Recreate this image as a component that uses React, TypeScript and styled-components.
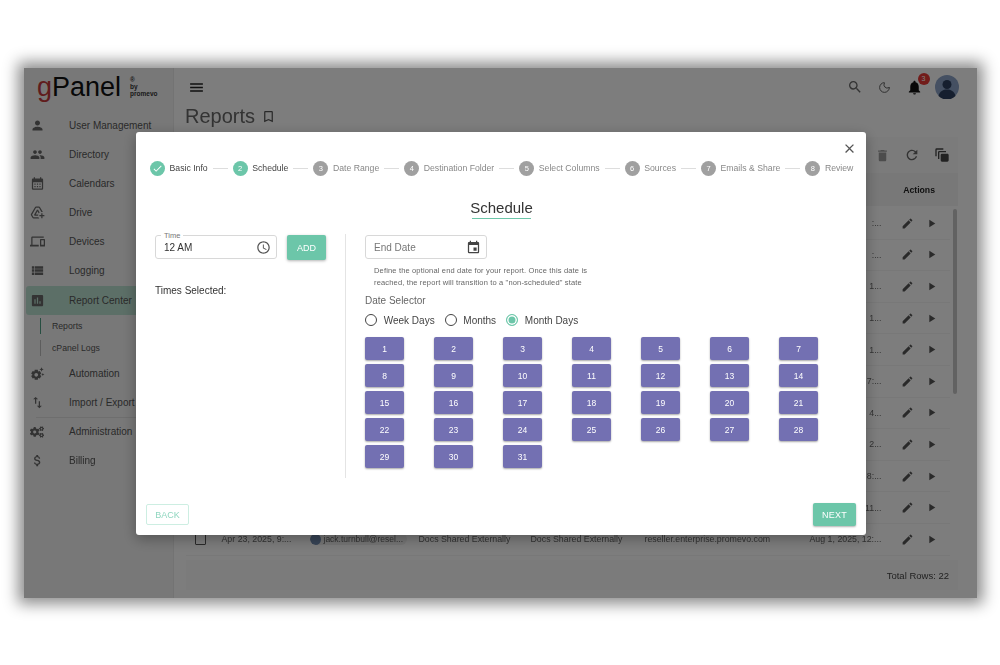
import styled, { createGlobalStyle } from "styled-components";
import {
  MdAccessTime,
  MdAddToDrive,
  MdAttachMoney,
  MdAutoAwesomeMotion,
  MdBookmarkBorder,
  MdCalendarMonth,
  MdCheck,
  MdClose,
  MdDelete,
  MdDevices,
  MdEdit,
  MdEvent,
  MdImportExport,
  MdInsertChart,
  MdMenu,
  MdNotifications,
  MdPeople,
  MdPerson,
  MdPlayArrow,
  MdRefresh,
  MdSearch,
  MdSettingsSuggest,
  MdViewList,
} from "react-icons/md";
import { FaCogs } from "react-icons/fa";
import { Moon } from "lucide-react";

const TEAL = "#6cc6a9";
const PURPLE = "#7370b2";

const GlobalStyle = createGlobalStyle`
  html, body {
    margin: 0;
    padding: 0;
    background: #fff;
    font-family: "Liberation Sans", Arial, sans-serif;
  }
`;

const navTop = [
  { label: "User Management", icon: <MdPerson /> },
  { label: "Directory", icon: <MdPeople /> },
  { label: "Calendars", icon: <MdCalendarMonth /> },
  { label: "Drive", icon: <MdAddToDrive /> },
  { label: "Devices", icon: <MdDevices /> },
  { label: "Logging", icon: <MdViewList /> },
];

const steps = [
  "Basic Info",
  "Schedule",
  "Date Range",
  "Destination Folder",
  "Select Columns",
  "Sources",
  "Emails & Share",
  "Review",
];

// only the tail of the date column shows beside the modal
const dateTails = [":...", ":...", "1...", "1...", "1...", "7:...", "4...", "2...", "8:...", "11..."];

const days = Array.from({ length: 31 }, (_, i) => i + 1);

const ActionIcons = () => (
  <RowActions>
    <MdEdit size={13} color="#555" />
    <MdPlayArrow size={13} color="#555" />
  </RowActions>
);

export default function App() {
  return (
    <Page>
      <GlobalStyle />
      <Frame>
        <Sidebar>
          <Logo>
            <LogoG>g</LogoG>Panel
            <LogoBy>
              ®
              <br />
              by
              <br />
              promevo
            </LogoBy>
          </Logo>
          {navTop.map((n) => (
            <NavItem key={n.label}>
              <NavIcon>{n.icon}</NavIcon>
              {n.label}
            </NavItem>
          ))}
          <NavItem $active>
            <NavIcon>
              <MdInsertChart />
            </NavIcon>
            Report Center
          </NavItem>
          <SubItem $active>Reports</SubItem>
          <SubItem>cPanel Logs</SubItem>
          <NavItem>
            <NavIcon>
              <MdSettingsSuggest />
            </NavIcon>
            Automation
          </NavItem>
          <NavItem>
            <NavIcon>
              <MdImportExport />
            </NavIcon>
            Import / Export
          </NavItem>
          <NavDivider />
          <NavItem>
            <NavIcon>
              <FaCogs size={14} />
            </NavIcon>
            Administration
          </NavItem>
          <NavItem>
            <NavIcon>
              <MdAttachMoney />
            </NavIcon>
            Billing
          </NavItem>
        </Sidebar>

        <Main>
          <TopBar>
            <MdMenu size={17} color="#222" />
            <TopRight>
              <MdSearch size={16} color="#666" />
              <Moon size={13} color="#555" strokeWidth={1.7} />
              <Bell>
                <MdNotifications size={17} color="#111" />
                <BellBadge>3</BellBadge>
              </Bell>
              <Avatar viewBox="0 0 24 24">
                <circle cx="12" cy="12" r="12" fill="#8aa0c4" />
                <circle cx="12" cy="9.5" r="4.500" fill="#2c3f5e" />
                <path d="M3.5 21c1-5 5-6.500 8.500-6.500s7.500 1.500 8.500 6.500a12 12 0 0 1-17 0z" fill="#2c3f5e" />
              </Avatar>
            </TopRight>
          </TopBar>
          <TitleRow>
            <PageTitle>Reports</PageTitle>
            <MdBookmarkBorder size={15} color="#555" />
          </TitleRow>
          <Card>
            <CardToolbar>
              <MdDelete size={15} color="#999" />
              <MdRefresh size={16} color="#666" />
              <MdAutoAwesomeMotion size={16} color="#444" />
            </CardToolbar>
            <TableHead>
              <ActionsHead>Actions</ActionsHead>
            </TableHead>
            <TableArea>
              <Rows>
                {dateTails.map((tail, i) => (
                  <Row key={i}>
                    <Cell $w={72} $right>
                      {tail}
                    </Cell>
                    <ActionIcons />
                  </Row>
                ))}
                <Row>
                  <RowCheck />
                  <Cell $w={88}>Apr 23, 2025, 9:...</Cell>
                  <Chip>
                    <ChipDot />
                    jack.turnbull@resel...
                  </Chip>
                  <Cell $w={112}>Docs Shared Externally</Cell>
                  <Cell $w={114}>Docs Shared Externally</Cell>
                  <Cell $w={165}>reseller.enterprise.promevo.com</Cell>
                  <Cell $w={72}>Aug 1, 2025, 12:...</Cell>
                  <ActionIcons />
                </Row>
              </Rows>
              <ScrollTrack>
                <ScrollThumb />
              </ScrollTrack>
            </TableArea>
            <CardFooter>Total Rows: 22</CardFooter>
          </Card>
        </Main>

        <Dim />

        <Modal>
          <CloseButton>
            <MdClose size={15} />
          </CloseButton>
          <Stepper>
            {steps.map((s, i) => (
              <Step key={s}>
                {i > 0 && <Connector />}
                <StepCircle $on={i < 2}>{i === 0 ? <MdCheck size={11} /> : i + 1}</StepCircle>
                <StepLabel $on={i < 2}>{s}</StepLabel>
              </Step>
            ))}
          </Stepper>
          <Heading>
            <HeadingText>Schedule</HeadingText>
          </Heading>
          <Body>
            <LeftCol>
              <TimeRow>
                <Field $w={122}>
                  <Legend>Time</Legend>
                  <FieldValue>12 AM</FieldValue>
                  <MdAccessTime size={15} color="#555" />
                </Field>
                <AddButton>ADD</AddButton>
              </TimeRow>
              <TimesLabel>Times Selected:</TimesLabel>
            </LeftCol>
            <RightCol>
              <Field $w={122}>
                <FieldPlaceholder>End Date</FieldPlaceholder>
                <MdEvent size={15} color="#444" />
              </Field>
              <HelpText>
                Define the optional end date for your report. Once this date is
                <br />
                reached, the report will transition to a "non-scheduled" state
              </HelpText>
              <SelectorLabel>Date Selector</SelectorLabel>
              <RadioRow>
                <RadioOption>
                  <Radio />
                  Week Days
                </RadioOption>
                <RadioOption>
                  <Radio />
                  Months
                </RadioOption>
                <RadioOption>
                  <Radio $on />
                  Month Days
                </RadioOption>
              </RadioRow>
              <DayGrid>
                {days.map((d) => (
                  <DayButton key={d}>{d}</DayButton>
                ))}
              </DayGrid>
            </RightCol>
          </Body>
          <ModalFooter>
            <BackButton>BACK</BackButton>
            <NextButton>NEXT</NextButton>
          </ModalFooter>
        </Modal>
      </Frame>
    </Page>
  );
}

const Page = styled.div`
  width: 1000px;
  height: 665px;
  box-sizing: border-box;
  padding: 68px 23px 67px 24px;
  overflow: hidden;
  filter: blur(0.5px);
`;

const Frame = styled.div`
  position: relative;
  display: flex;
  height: 530px;
  background: #fafafa;
  box-shadow: 0 0 14px 6px rgba(0, 0, 0, 0.45);
  color: #555;
  overflow: hidden;
`;

const Dim = styled.div`
  position: absolute;
  inset: 0;
  background: rgba(0, 0, 0, 0.5);
`;

const Sidebar = styled.div`
  width: 150px;
  flex: none;
  box-sizing: border-box;
  background: #f0f0f0;
  border-right: 1px solid #e6e6e6;
  padding: 2px 0 0 2px;
  display: flex;
  flex-direction: column;
`;

const Logo = styled.div`
  height: 41px;
  padding-left: 11px;
  font-size: 27px;
  line-height: 34px;
  color: #111;
  display: flex;
  flex: none;
`;

const LogoG = styled.span`
  color: #c0393b;
`;

const LogoBy = styled.span`
  font-size: 6.5px;
  line-height: 7px;
  font-weight: 700;
  color: #333;
  margin: 6px 0 0 9px;
`;

const NavItem = styled.div<{ $active?: boolean }>`
  height: 29px;
  flex: none;
  display: flex;
  align-items: center;
  font-size: 10px;
  color: #555;
  background: ${(p) => (p.$active ? "#b9decf" : "transparent")};
  border-radius: 3px 0 0 3px;
  margin-top: ${(p) => (p.$active ? "1px" : "0")};
`;

const NavIcon = styled.span`
  width: 43px;
  flex: none;
  box-sizing: border-box;
  padding-left: 4px;
  font-size: 15px;
  display: flex;
  color: #666;
`;

const SubItem = styled.div<{ $active?: boolean }>`
  height: 16px;
  flex: none;
  margin: 3px 0 3px 14px;
  border-left: 1px solid ${(p) => (p.$active ? "#4f9c83" : "#bbb")};
  padding-left: 11px;
  font-size: 8.7px;
  line-height: 16px;
  color: #555;
`;

const NavDivider = styled.div`
  height: 1px;
  flex: none;
  margin: 0 0 -1px 10px;
  background: #ddd;
`;

const Main = styled.div`
  flex: 1;
  min-width: 0;
  padding: 0 19px 8px 12px;
  display: flex;
  flex-direction: column;
`;

const TopBar = styled.div`
  height: 38px;
  flex: none;
  display: flex;
  align-items: center;
  justify-content: space-between;
  padding-left: 2px;
`;

const TopRight = styled.div`
  display: flex;
  align-items: center;
  gap: 15px;
`;

const Bell = styled.div`
  position: relative;
  display: flex;
  margin-right: -2.5px;
`;

const BellBadge = styled.span`
  position: absolute;
  top: -6px;
  right: -7px;
  width: 12px;
  height: 12px;
  border-radius: 50%;
  background: #e53935;
  color: #fff;
  font-size: 7px;
  line-height: 12px;
  text-align: center;
`;

const Avatar = styled.svg`
  width: 24px;
  height: 24px;
  margin-right: -1px;
`;

const TitleRow = styled.div`
  height: 21px;
  margin-bottom: 10px;
  flex: none;
  display: flex;
  align-items: center;
  gap: 6px;
  margin-left: -1px;
`;

const PageTitle = styled.h1`
  margin: 0;
  font-size: 20px;
  font-weight: 400;
  color: #666;
`;

const Card = styled.div`
  flex: 1;
  display: flex;
  flex-direction: column;
  min-height: 0;
`;

const CardToolbar = styled.div`
  height: 36px;
  flex: none;
  background: #f7f7f7;
  display: flex;
  align-items: center;
  justify-content: flex-end;
  gap: 14px;
  padding-right: 8px;
`;

const TableHead = styled.div`
  height: 33px;
  flex: none;
  display: flex;
  align-items: center;
  justify-content: flex-end;
  background: #f1f1f1;
  padding-right: 23px;
`;

const ActionsHead = styled.span`
  font-size: 8.7px;
  font-weight: 700;
  color: #222;
`;

const TableArea = styled.div`
  flex: none;
  height: 350px;
  position: relative;
  overflow: hidden;
  padding-right: 8px;
  box-sizing: border-box;
`;

const Rows = styled.div`
  display: grid;
  grid-auto-rows: 31.6px;
  padding-top: 2px;
`;

const Row = styled.div`
  display: flex;
  align-items: center;
  justify-content: flex-end;
  border-bottom: 1px solid #f0f0f0;
  font-size: 8.8px;
  color: #666;
`;

const RowCheck = styled.span`
  width: 9px;
  height: 9px;
  border: 1px solid #555;
  border-radius: 1px;
  margin-right: 16px;
  flex: none;
`;

const Cell = styled.span<{ $w: number; $right?: boolean }>`
  width: ${(p) => p.$w}px;
  flex: none;
  white-space: nowrap;
  text-align: ${(p) => (p.$right ? "right" : "left")};
`;

const Chip = styled.span`
  width: 97px;
  height: 12px;
  margin-right: 12px;
  flex: none;
  display: flex;
  align-items: center;
  gap: 3px;
  font-size: 8.5px;
  background: #ececec;
  border-radius: 6px;
  white-space: nowrap;
  overflow: hidden;
`;

const ChipDot = styled.span`
  width: 11px;
  height: 11px;
  border-radius: 50%;
  background: #6f88ad;
  flex: none;
`;

const RowActions = styled.span`
  display: flex;
  align-items: center;
  gap: 11px;
  margin: 0 12.5px 0 19px;
  flex: none;
`;

const ScrollTrack = styled.div`
  position: absolute;
  top: 0;
  right: 0;
  width: 6px;
  height: 100%;
`;

const ScrollThumb = styled.div`
  height: 185px;
  margin: 3px 0 0 1px;
  width: 4px;
  border-radius: 2px;
  background: #c4c4c4;
`;

const CardFooter = styled.div`
  flex: 1;
  display: flex;
  align-items: center;
  justify-content: flex-end;
  padding-right: 9px;
  background: #f7f7f7;
  font-size: 9.5px;
  color: #444;
  margin-top: 4px;
`;

const Modal = styled.div`
  position: absolute;
  left: 112px;
  top: 64px;
  width: 730px;
  height: 403px;
  box-sizing: border-box;
  padding: 28px 10px 9px;
  background: #fff;
  border-radius: 3px;
  display: flex;
  flex-direction: column;
  box-shadow: 0 4px 14px rgba(0, 0, 0, 0.3);
`;

const CloseButton = styled.span`
  position: absolute;
  top: 9px;
  right: 9px;
  display: flex;
  color: #555;
`;

const Stepper = styled.div`
  display: flex;
  align-items: center;
  padding-left: 4px;
  height: 16px;
`;

const Step = styled.div`
  display: flex;
  align-items: center;
`;

const Connector = styled.span`
  width: 15px;
  height: 1px;
  background: #ddd;
  margin: 0 5px;
`;

const StepCircle = styled.span<{ $on?: boolean }>`
  width: 15px;
  height: 15px;
  border-radius: 50%;
  background: ${(p) => (p.$on ? TEAL : "#a0a0a0")};
  color: #fff;
  font-size: 7.5px;
  display: flex;
  align-items: center;
  justify-content: center;
  flex: none;
`;

const StepLabel = styled.span<{ $on?: boolean }>`
  margin-left: 4.5px;
  font-size: 8.7px;
  color: ${(p) => (p.$on ? "#444" : "#888")};
  white-space: nowrap;
`;

const Heading = styled.div`
  display: flex;
  justify-content: center;
  margin-top: 23px;
`;

const HeadingText = styled.h2`
  position: relative;
  margin: 0 0 0 1px;
  font-size: 15px;
  font-weight: 400;
  line-height: 18px;
  padding-bottom: 2px;
  color: #333;
  &::after {
    content: "";
    position: absolute;
    left: 2px;
    right: 2px;
    bottom: 0;
    height: 1px;
    background: ${TEAL};
  }
`;

const Body = styled.div`
  display: flex;
  margin-top: 15px;
  height: 244px;
`;

const LeftCol = styled.div`
  width: 200px;
  box-sizing: border-box;
  padding-left: 9px;
  border-right: 1px solid #e4e4e4;
  flex: none;
`;

const TimeRow = styled.div`
  display: flex;
  gap: 10px;
  padding-top: 1px;
`;

const Field = styled.div<{ $w: number }>`
  position: relative;
  width: ${(p) => p.$w}px;
  height: 24px;
  box-sizing: border-box;
  border: 1px solid #d8d8d8;
  border-radius: 3px;
  padding: 0 5px 0 8px;
  display: flex;
  align-items: center;
  justify-content: space-between;
  flex: none;
`;

const Legend = styled.span`
  position: absolute;
  top: -5px;
  left: 5px;
  padding: 0 3px;
  font-size: 7.5px;
  line-height: 9px;
  color: #777;
  background: #fff;
`;

const FieldValue = styled.span`
  font-size: 10px;
  color: #333;
`;

const FieldPlaceholder = styled.span`
  font-size: 10px;
  color: #777;
`;

const AddButton = styled.button`
  width: 39px;
  height: 25px;
  padding: 0;
  border: 0;
  border-radius: 2px;
  background: ${TEAL};
  color: #fff;
  font: 9px "Liberation Sans", Arial, sans-serif;
  box-shadow: 0 1px 3px rgba(0, 0, 0, 0.3);
`;

const TimesLabel = styled.div`
  margin-top: 25px;
  font-size: 10px;
  line-height: 12px;
  color: #333;
`;

const RightCol = styled.div`
  flex: 1;
  padding: 1px 0 0 19px;
  min-width: 0;
`;

const HelpText = styled.div`
  margin: 6px 0 0 9px;
  font-size: 7.5px;
  line-height: 12px;
  letter-spacing: 0.16px;
  color: #666;
`;

const SelectorLabel = styled.div`
  margin-top: 5px;
  font-size: 10px;
  line-height: 13px;
  color: #666;
`;

const RadioRow = styled.div`
  display: flex;
  gap: 10px;
  margin-top: 6px;
  height: 14px;
`;

const RadioOption = styled.label`
  display: flex;
  align-items: center;
  gap: 6.7px;
  font-size: 10px;
  color: #444;
`;

const Radio = styled.span<{ $on?: boolean }>`
  width: 12px;
  height: 12px;
  box-sizing: border-box;
  border-radius: 50%;
  border: 1px solid ${(p) => (p.$on ? TEAL : "#444")};
  background: ${(p) => (p.$on ? TEAL : "transparent")};
  box-shadow: ${(p) => (p.$on ? "inset 0 0 0 1.5px #fff" : "none")};
`;

const DayGrid = styled.div`
  display: grid;
  grid-template-columns: repeat(7, 39px);
  grid-auto-rows: 23px;
  column-gap: 30px;
  row-gap: 4px;
  margin-top: 10px;
`;

const DayButton = styled.button`
  padding: 0;
  border: 0;
  border-radius: 2px;
  background: ${PURPLE};
  color: #fff;
  font: 8.5px "Liberation Sans", Arial, sans-serif;
  box-shadow: 0 1px 2px rgba(0, 0, 0, 0.35);
`;

const ModalFooter = styled.div`
  margin-top: auto;
  display: flex;
  justify-content: space-between;
  align-items: center;
`;

const BackButton = styled.button`
  width: 43px;
  height: 21px;
  padding: 0;
  background: #fff;
  border: 1px solid #cdeee2;
  border-radius: 2px;
  color: #8fd6bf;
  font: 9px "Liberation Sans", Arial, sans-serif;
`;

const NextButton = styled.button`
  width: 43px;
  height: 23px;
  padding: 0;
  background: ${TEAL};
  border: 0;
  border-radius: 2px;
  color: #fff;
  font: 9px "Liberation Sans", Arial, sans-serif;
  letter-spacing: 0.3px;
  box-shadow: 0 1px 2px rgba(0, 0, 0, 0.3);
`;
